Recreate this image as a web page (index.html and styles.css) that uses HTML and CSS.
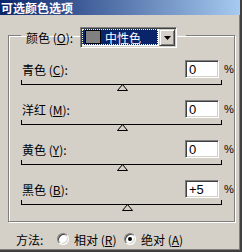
FILE: index.html
```html
<!DOCTYPE html>
<html lang="zh-CN">
<head>
  <meta charset="UTF-8" />
  <title>可选颜色选项</title>
  <link rel="stylesheet" href="styles.css">
</head>
<body>
  <div class="window">
    <div class="titlebar">可选颜色选项</div>

    <fieldset class="group">
      <legend class="group-head">
        <span class="head-label">颜色 (<u>O</u>):</span>
        <span class="combo">
          <span class="combo-value"><span class="swatch"></span>中性色</span>
          <span class="combo-btn">
            <svg width="7" height="4" viewBox="0 0 7 4"><path d="M0 0h7L3.5 4z" fill="#000"/></svg>
          </span>
        </span>
      </legend>

      <!-- sliders: value -100..100 -->
      <div class="row">
        <div class="row-top">
          <span class="row-label">青色 (<u>C</u>):</span>
          <span class="field">0</span>
          <span class="pct">%</span>
        </div>
        <div class="track">
          <svg class="thumb" style="left: 95px" width="11" height="7" viewBox="0 0 11 7"><path d="M5.5 0.5L10.5 6.5H0.5z" fill="#d4d0c8" stroke="#000"/></svg>
        </div>
      </div>

      <div class="row">
        <div class="row-top">
          <span class="row-label">洋红 (<u>M</u>):</span>
          <span class="field">0</span>
          <span class="pct">%</span>
        </div>
        <div class="track">
          <svg class="thumb" style="left: 95px" width="11" height="7" viewBox="0 0 11 7"><path d="M5.5 0.5L10.5 6.5H0.5z" fill="#d4d0c8" stroke="#000"/></svg>
        </div>
      </div>

      <div class="row">
        <div class="row-top">
          <span class="row-label">黄色 (<u>Y</u>):</span>
          <span class="field">0</span>
          <span class="pct">%</span>
        </div>
        <div class="track">
          <svg class="thumb" style="left: 95px" width="11" height="7" viewBox="0 0 11 7"><path d="M5.5 0.5L10.5 6.5H0.5z" fill="#d4d0c8" stroke="#000"/></svg>
        </div>
      </div>

      <div class="row">
        <div class="row-top">
          <span class="row-label">黑色 (<u>B</u>):</span>
          <span class="field">+5</span>
          <span class="pct">%</span>
        </div>
        <div class="track">
          <svg class="thumb" style="left: 100px" width="11" height="7" viewBox="0 0 11 7"><path d="M5.5 0.5L10.5 6.5H0.5z" fill="#d4d0c8" stroke="#000"/></svg>
        </div>
      </div>
    </fieldset>

    <div class="method">
      <span class="method-label">方法:</span>
      <span class="option"><span class="radio"></span>相对 (<u>R</u>)</span>
      <span class="option"><span class="radio checked"></span>绝对 (<u>A</u>)</span>
    </div>
  </div>
</body>
</html>
```

FILE: styles.css
```css
body { margin: 0; background: #d4d0c8; font: 12px "Noto Sans CJK SC", "Liberation Sans", sans-serif; color: #000; }
u { text-decoration: underline; }

.window { width: 242px; height: 252px; box-sizing: border-box; overflow: hidden;
  border-right: 2px solid #404040; border-bottom: 2px solid #404040;
  box-shadow: inset -1px -1px #808080; }

.titlebar { height: 15px; line-height: 15px; padding-left: 1px;
  background: linear-gradient(to right, #0a246a, #a6caf0); color: #fff; font-size: 12px; font-weight: bold; white-space: nowrap; }

.group { margin: 8px 5px 0 8px; padding: 12px 0 1px 0; min-width: 0;
  border: 1px solid #808080; box-shadow: inset 1px 1px #fff, 1px 1px #fff; }
.group-head { margin-left: 12px; padding: 4px 9px 0 5px; display: flex; align-items: center; }
.head-label { width: 54px; line-height: 21px; }

.combo { display: flex; width: 97px; height: 21px; box-sizing: border-box;
  border: 1px solid; border-color: #808080 #fff #fff #808080;
  box-shadow: inset 1px 1px #404040, inset -1px -1px #d4d0c8; padding: 2px; background: #fff; }
.combo-value { flex: 1; display: flex; align-items: center; gap: 4px; background: #0a246a; color: #fff;
  border: 1px dotted #ffffc0; padding-left: 2px; line-height: 15px; margin-right: 1px; margin-top: -1px; margin-left: -1px; }
.swatch { width: 14px; height: 12px; background: #808080; border: 1px solid #000; }
.combo-btn { width: 16px; margin: -1px -1px -1px 0; display: flex; align-items: center; justify-content: center;
  background: #d4d0c8; box-sizing: border-box; border: 1px solid; border-color: #d4d0c8 #404040 #404040 #d4d0c8;
  box-shadow: inset 1px 1px #fff, inset -1px -1px #808080; }

.row { height: 40px; }
.row-top { display: flex; align-items: center; height: 18px; padding-left: 13px; }
.row-label { flex: 1; }
.field { width: 34px; height: 18px; box-sizing: border-box; background: #fff; padding: 1px 0 0 3px;
  font: 13px/15px "Liberation Sans", sans-serif;
  border: 1px solid; border-color: #808080 #fff #fff #808080; box-shadow: inset 1px 1px #404040, inset -1px -1px #d4d0c8; }
.pct { width: 10px; margin-left: 5px; font: 11px "Liberation Sans", sans-serif; }

.track { position: relative; margin: 2px 0 0 12px; width: 201px; height: 5px; box-sizing: border-box;
  border: 1px solid #000; border-top: 0; }
.thumb { position: absolute; top: 4px; display: block; }

.method { display: flex; align-items: center; height: 14px; margin-top: 10px; padding-left: 16px; }
.method-label { width: 41px; }
.option { display: flex; align-items: center; width: 67px; }
.radio { width: 12px; height: 12px; box-sizing: border-box; border-radius: 50%; margin-right: 5px; background: #fff;
  border: 1px solid; border-color: #808080 #fff #fff #808080; box-shadow: inset 1px 1px #404040, inset -1px -1px #d4d0c8;
  display: flex; align-items: center; justify-content: center; }
.radio.checked::after { content: ""; width: 4px; height: 4px; border-radius: 50%; background: #000; }
```
